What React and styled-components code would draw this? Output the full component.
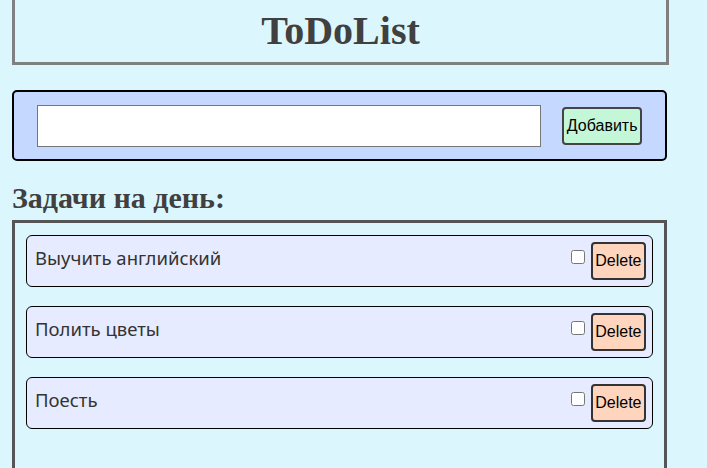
import styled, { createGlobalStyle } from "styled-components";

const GlobalStyle = createGlobalStyle`
  body {
    margin: 0;
    background: #dcf6fe;
    font-family: "Liberation Serif", serif;
  }
`;

const tasks = ["Выучить английский", "Полить цветы", "Поесть"];

const App = () => {
  return (
    <Page>
      <GlobalStyle />
      <Header>
        <Title>ToDoList</Title>
      </Header>
      <AddForm onSubmit={(e) => e.preventDefault()}>
        <TaskInput type="text" />
        <AddButton type="submit">Добавить</AddButton>
      </AddForm>
      <SectionTitle>Задачи на день:</SectionTitle>
      <TaskList>
        {tasks.map((task) => (
          <TaskItem key={task}>
            <TaskText>{task}</TaskText>
            <Controls>
              <Check type="checkbox" />
              <DeleteButton>Delete</DeleteButton>
            </Controls>
          </TaskItem>
        ))}
      </TaskList>
    </Page>
  );
};

const Page = styled.div`
  padding: 0 0 0 12px;
  display: flex;
  flex-direction: column;
  align-items: flex-start;
`;

const Header = styled.header`
  box-sizing: border-box;
  width: 657px;
  height: 65px;
  border: 3px solid #808080;
  border-top: none;
  display: flex;
  align-items: center;
  justify-content: center;
`;

const Title = styled.h1`
  margin: 0 0 2px;
  font-family: "Liberation Serif", serif;
  font-size: 40px;
  font-weight: 700;
  color: #404040;
`;

const AddForm = styled.form`
  box-sizing: border-box;
  width: 655px;
  margin-top: 25px;
  padding: 13px 23px 12px;
  background: #c5d8ff;
  border: 2px solid #000;
  border-radius: 5px;
  display: flex;
  align-items: center;
  gap: 21px;
`;

const TaskInput = styled.input`
  flex: 1;
  box-sizing: border-box;
  height: 42px;
  margin: 0;
  border: 1px solid #767676;
  background: #fff;
`;

const AddButton = styled.button`
  box-sizing: border-box;
  height: 38px;
  padding: 0 2.5px;
  background: #c3f7d8;
  border: 2px solid #444;
  border-radius: 4px;
  font-family: "Liberation Sans", Arial, sans-serif;
  font-size: 16px;
  color: #000;
`;

const SectionTitle = styled.h2`
  margin: 20px 0 5px;
  font-family: "Liberation Serif", serif;
  font-size: 30px;
  line-height: 34px;
  font-weight: 700;
  color: #404040;
`;

const TaskList = styled.div`
  box-sizing: border-box;
  width: 655px;
  min-height: 260px;
  border: 3px solid #555;
  padding: 12px 11px;
  display: flex;
  flex-direction: column;
  gap: 19px;
`;

const TaskItem = styled.div`
  box-sizing: border-box;
  height: 52px;
  padding: 0 6px 0 8px;
  background: #e6ebff;
  border: 1px solid #000;
  border-radius: 6px;
  display: flex;
  align-items: center;
  justify-content: space-between;
`;

const TaskText = styled.span`
  padding-bottom: 5px;
  font-family: "Noto Sans", sans-serif;
  font-size: 18.5px;
  line-height: 1;
  color: #333;
`;

const Controls = styled.div`
  display: flex;
  align-items: center;
`;

const Check = styled.input`
  width: 14px;
  height: 14px;
  margin: 0 6px 8px 0;
`;

const DeleteButton = styled.button`
  box-sizing: border-box;
  height: 38px;
  padding: 0 2.5px;
  background: #ffd5bd;
  border: 2px solid #333;
  border-radius: 4px;
  font-family: "Liberation Sans", Arial, sans-serif;
  font-size: 16px;
  color: #000;
`;

export default App;
